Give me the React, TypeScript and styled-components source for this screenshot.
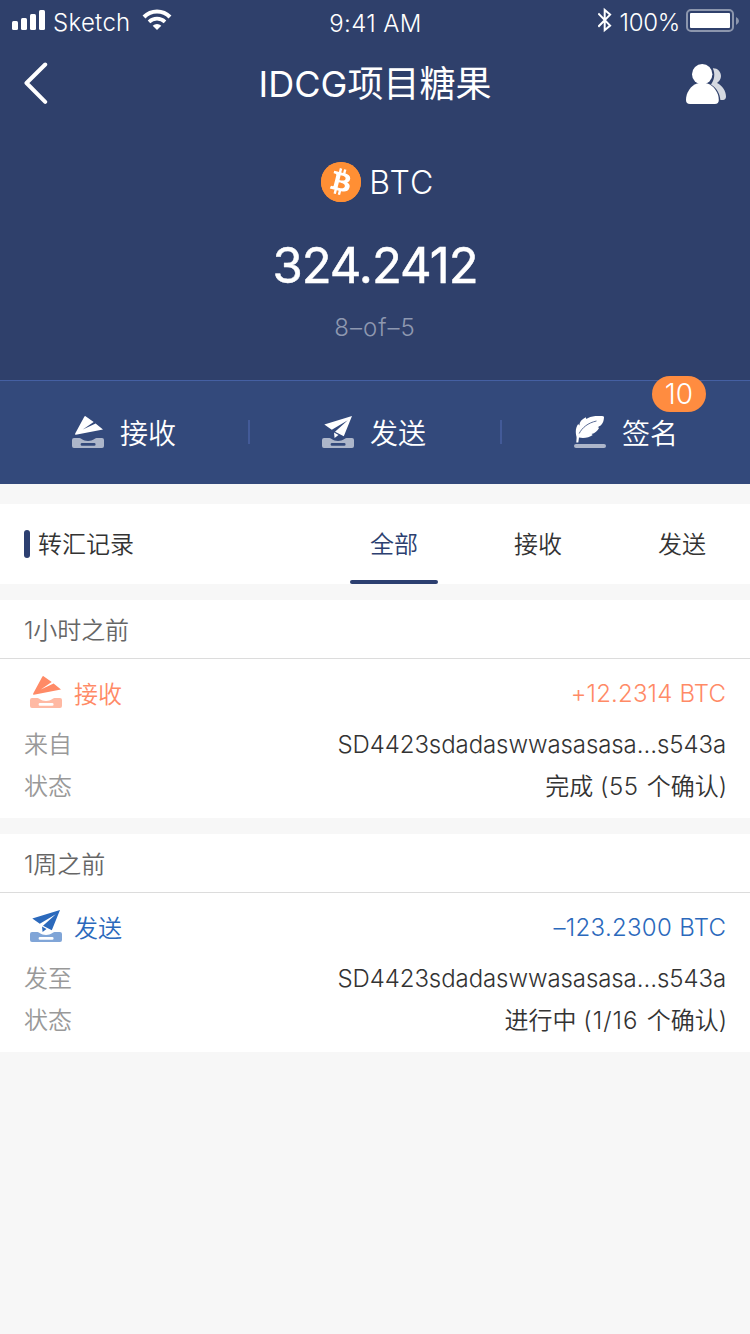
import React from "react";
import styled, { createGlobalStyle } from "styled-components";
import { FaBitcoin } from "react-icons/fa";

const GlobalStyle = createGlobalStyle`
  * { box-sizing: border-box; }
  body {
    margin: 0;
    background: #f7f7f7;
    color: #333;
    font-family: Inter, "Noto Sans CJK SC", sans-serif;
    font-weight: 350;
  }
  svg { display: block; flex: none; }
`;

const Screen = styled.div`
  width: 750px;
  min-height: 1334px;
  background: #f7f7f7;
`;

const Hero = styled.header`
  height: 380px;
  background: #2f406b;
  color: #fff;
`;

const StatusBar = styled.div`
  display: grid;
  grid-template-columns: 1fr auto 1fr;
  height: 40px;
  padding: 0 11px 0 12px;
`;

const StatusGroup = styled.div<{ $end?: boolean }>`
  display: flex;
  align-items: flex-start;
  justify-content: ${(p) => (p.$end ? "flex-end" : "flex-start")};
`;

const StatusText = styled.span<{ $spacing: number; $top?: number; $gap?: number }>`
  margin-top: ${(p) => p.$top ?? 8}px;
  margin-right: ${(p) => p.$gap ?? 0}px;
  font-size: 24px;
  line-height: 30px;
  letter-spacing: ${(p) => p.$spacing}px;
  white-space: nowrap;
`;

const NavBar = styled.nav`
  display: grid;
  grid-template-columns: 40px 1fr 40px;
  align-items: center;
  height: 88px;
  padding: 0 24px;
`;

const Title = styled.h1`
  margin: 0;
  text-align: center;
  font-size: 36px;
  line-height: 50px;
  font-weight: 400;
  letter-spacing: 0;
`;

const Balance = styled.section`
  display: flex;
  flex-direction: column;
  align-items: center;
  padding-top: 34px;
`;

const Coin = styled.div`
  display: flex;
  align-items: center;
  gap: 8px;
  height: 40px;
  margin-left: 6px;
`;

const CoinBadge = styled.span`
  width: 40px;
  height: 40px;
  border-radius: 50%;
  overflow: hidden;
  background: radial-gradient(#fff 50%, #ff8f34 54%);
  color: #ff8f34;

  svg { margin: -2px; }
`;

const CoinName = styled.span`
  padding-top: 2px;
  font-size: 32px;
  line-height: 40px;
  font-weight: 300;
  letter-spacing: 1.2px;
`;

const Amount = styled.strong`
  margin-top: 34px;
  font-size: 49px;
  line-height: 60px;
  font-weight: 400;
  letter-spacing: -1px;
  -webkit-text-stroke: 0.5px #fff;
`;

const Quorum = styled.span`
  margin-top: 17px;
  font-size: 24px;
  line-height: 30px;
  letter-spacing: 1px;
  color: #8e98b0;
`;

const ActionBar = styled.div`
  display: flex;
  align-items: center;
  height: 104px;
  background: #33497b;
  box-shadow: inset 0 1px #4560a3;
  color: #fff;
`;

const Action = styled.button<{ $nudge?: number }>`
  flex: 1;
  position: relative;
  display: flex;
  align-items: center;
  justify-content: center;
  gap: 16px;
  height: 100%;
  padding: 0 ${(p) => p.$nudge ?? 0}px 0 0;
  border: 0;
  background: none;
  color: inherit;
  font: inherit;
`;

const ActionLabel = styled.span`
  padding-top: 3px;
  font-size: 28px;
  line-height: 40px;
`;

const Divider = styled.i`
  width: 2px;
  height: 24px;
  background: #435a98;
`;

const CountBadge = styled.span`
  position: absolute;
  top: -4px;
  right: 44px;
  width: 54px;
  height: 36px;
  border-radius: 18px;
  background: #ff8c40;
  font-size: 28px;
  line-height: 37px;
  text-align: center;
`;

const RecordsBar = styled.div`
  display: flex;
  align-items: stretch;
  justify-content: space-between;
  height: 80px;
  margin: 20px 0 16px;
  padding: 0 24px;
  background: #fff;
  font-size: 24px;
`;

const RecordsTitle = styled.h2`
  display: flex;
  align-items: center;
  gap: 8px;
  margin: 0;
  padding-top: 2px;
  font-size: 24px;
  line-height: 40px;
  font-weight: 350;

  &::before {
    content: "";
    width: 6px;
    height: 28px;
    margin-bottom: 2px;
    border-radius: 3px;
    background: #2c3f70;
  }
`;

const Tabs = styled.div`
  display: flex;
  gap: 56px;
`;

const Tab = styled.button<{ $active?: boolean }>`
  display: flex;
  flex-direction: column;
  justify-content: space-between;
  width: 88px;
  padding: 21px 0 0;
  border: 0;
  background: none;
  color: ${(p) => (p.$active ? "#2c3f70" : "#333")};
  font: inherit;
  line-height: 40px;

  &::after {
    content: "";
    width: 88px;
    height: 4px;
    border-radius: 2px;
    background: ${(p) => (p.$active ? "#2c3f70" : "transparent")};
  }
`;

const TabText = styled.span`
  align-self: center;
`;

const Card = styled.article`
  height: 218px;
  margin-bottom: 16px;
  background: #fff;
  font-size: 24px;
`;

const CardTime = styled.div`
  height: 59px;
  padding: 0 24px;
  border-bottom: 1px solid #dcdcdc;
  color: #666;
  line-height: 61px;
  letter-spacing: -0.1px;
`;

const CardHead = styled.div<{ $color: string }>`
  display: flex;
  align-items: center;
  height: 64px;
  padding: 2px 24px 0 30px;
  color: ${(p) => p.$color};
`;

const Kind = styled.span`
  flex: 1;
  margin-left: 12px;
`;

const Sum = styled.span<{ $spacing: number }>`
  margin-top: 2px;
  letter-spacing: ${(p) => p.$spacing}px;
  margin-right: ${(p) => -p.$spacing}px;
`;

const Line = styled.div`
  display: flex;
  justify-content: space-between;
  height: 42px;
  padding: 0 24px;
  line-height: 44px;
`;

const Label = styled.span`
  color: #999;
`;

const Address = styled.span`
  letter-spacing: -0.08px;
`;

const Status = styled.span`
  margin-right: -1px;
`;

const Confirmations = styled.span<{ $spacing: number }>`
  margin-right: 1.5px;
  letter-spacing: ${(p) => p.$spacing}px;
`;

const SignalIcon = () => (
  <svg width="41" height="40" fill="#fff">
    <rect x="0" y="21" width="6" height="9" rx="1.5" />
    <rect x="9" y="18" width="6" height="12" rx="1.5" />
    <rect x="18" y="14" width="6" height="16" rx="1.5" />
    <rect x="27" y="10" width="6" height="20" rx="1.5" />
  </svg>
);

const WifiIcon = () => (
  <svg width="42" height="40" viewBox="0 0 42 40" fill="none" stroke="#fff">
    <path d="M13 17a18 18 0 0 1 26 0" strokeWidth="4" />
    <path d="M18 21.900a11.500 11.500 0 0 1 16 0" strokeWidth="3.600" />
    <path d="M26 30l-4.300-4.200a6.200 6.200 0 0 1 8.600 0z" fill="#fff" stroke="none" />
  </svg>
);

const BluetoothIcon = () => (
  <svg width="22" height="40" viewBox="0 0 22 40" fill="none" stroke="#fff" strokeWidth="2">
    <path d="M.3 13.500L12.100 25.600 6.700 30.200V10L12.100 14.600.3 26.700" />
  </svg>
);

const BatteryIcon = () => (
  <svg width="53" height="40" fill="#fff">
    <rect x="1" y="10" width="46" height="21" rx="4" fill="none" stroke="#fff" strokeOpacity=".45" strokeWidth="2" />
    <rect x="4" y="13" width="40" height="15" rx="1" />
    <path d="M50 17q3 1.500 3 4t-3 4z" opacity=".45" />
  </svg>
);

const BackIcon = () => (
  <svg width="26" height="44" viewBox="0 0 26 44" fill="none" stroke="#fff" strokeWidth="4" strokeLinecap="round" strokeLinejoin="round">
    <path d="M21.200 2.500L2.500 21l18.700 18.800" />
  </svg>
);

const PeopleIcon = () => (
  <svg width="40" height="40" viewBox="0 0 40 40" fill="#fff">
    <path d="M26.800 4.300C31.300 4 35 7.600 35 12c0 3-1.600 5.300-4 7 5.500 2.600 9 8 9 13.500 0 2.300-1.200 3.500-3 3.500h-2.600c-.6-6.400-3.600-12-9.400-15.500 3.200-4.300 4.600-10.300 1.800-16.200z" opacity=".8" />
    <circle cx="16.200" cy="10.200" r="10.200" />
    <path d="M11 19.500h10.500C28 22 32.800 28.500 32.800 36c0 2.700-1.300 4-4 4H4c-2.700 0-4-1.300-4-4 0-7.500 4.500-14 11-16.500z" />
  </svg>
);

const Tray = () => (
  <path
    opacity=".6"
    fillRule="evenodd"
    d="M2 22h5.500c2 0 3 3 8.500 3s6.500-3 8.500-3H30q2 0 2 2v6q0 2-2 2H2q-2 0-2-2v-6q0-2 2-2zM10 27a1.400 1.400 0 0 0 0 2.800h12.200a1.400 1.400 0 0 0 0-2.800z"
  />
);

const ReceiveIcon = () => (
  <svg width="32" height="32" viewBox="0 0 32 32" fill="currentColor">
    <path d="M13.200 0L21.700 5.900 10.800 13.600 23.600 7.400 31 13.600 3.800 18.800Q2.600 18.800 3.200 17.500L12.400.5z" />
    <Tray />
  </svg>
);

const SendIcon = () => (
  <svg width="32" height="32" viewBox="0 0 32 32" fill="currentColor">
    <path d="M30 0L2.300 8.400 9.800 13.800 25.800 4.200 13 15.800 21.800 20.300z" />
    <path d="M12 16.500l4.500 2.500-3.900 3z" />
    <Tray />
  </svg>
);

const SignIcon = () => (
  <svg width="32" height="32" viewBox="0 0 32 32" fill="currentColor">
    <path d="M30 1.300C29.800 5.500 28.600 9.300 23.700 11.200L25.200 11.800C23.500 15.200 21 17.300 17.500 18L18.800 18.900C15 21.500 10.500 22.600 5 21.600L4.300 26.500H2.300C2.300 24 3 22 2.200 19.500 1.300 15.500 1.800 11.500 4.200 8L5.400 9.500C5.300 6 7.500 3.500 11.800 1.200L12.300 3C16 .3 23-.8 29 .2Q30 .4 30 1.300z" />
    <path d="M5.200 17.500C8 11.800 14 6.800 22.500 5" fill="none" stroke="#33497b" strokeWidth=".8" />
    <rect y="28" width="32" height="4" rx="2" opacity=".6" />
  </svg>
);

const records = [
  {
    time: "1小时之前",
    kind: "接收",
    icon: <ReceiveIcon />,
    color: "#ff8a66",
    sum: "+12.2314 BTC",
    sumSpacing: 0.17,
    party: "来自",
    state: "完成",
    count: "(55",
    countSpacing: 0.5,
  },
  {
    time: "1周之前",
    kind: "发送",
    icon: <SendIcon />,
    color: "#2b69bc",
    sum: "–123.2300 BTC",
    sumSpacing: 0.3,
    party: "发至",
    state: "进行中",
    count: "(1/16",
    countSpacing: 1,
  },
];

export default function App() {
  return (
    <Screen>
      <GlobalStyle />
      <Hero>
        <StatusBar>
          <StatusGroup>
            <SignalIcon />
            <StatusText $spacing={0.3}>Sketch</StatusText>
            <WifiIcon />
          </StatusGroup>
          <StatusText $spacing={0.4} $top={9}>9:41 AM</StatusText>
          <StatusGroup $end>
            <BluetoothIcon />
            <StatusText $spacing={-0.3} $gap={6}>100%</StatusText>
            <BatteryIcon />
          </StatusGroup>
        </StatusBar>
        <NavBar>
          <BackIcon />
          <Title>IDCG项目糖果</Title>
          <PeopleIcon />
        </NavBar>
        <Balance>
          <Coin>
            <CoinBadge>
              <FaBitcoin size={44} />
            </CoinBadge>
            <CoinName>BTC</CoinName>
          </Coin>
          <Amount>324.2412</Amount>
          <Quorum>8–of–5</Quorum>
        </Balance>
      </Hero>
      <ActionBar>
        <Action>
          <ReceiveIcon />
          <ActionLabel>接收</ActionLabel>
        </Action>
        <Divider />
        <Action $nudge={2}>
          <SendIcon />
          <ActionLabel>发送</ActionLabel>
        </Action>
        <Divider />
        <Action>
          <SignIcon />
          <ActionLabel>签名</ActionLabel>
          <CountBadge>10</CountBadge>
        </Action>
      </ActionBar>
      <RecordsBar>
        <RecordsTitle>转汇记录</RecordsTitle>
        <Tabs>
          <Tab $active><TabText>全部</TabText></Tab>
          <Tab><TabText>接收</TabText></Tab>
          <Tab><TabText>发送</TabText></Tab>
        </Tabs>
      </RecordsBar>
      {records.map((r) => (
        <Card key={r.time}>
          <CardTime>{r.time}</CardTime>
          <CardHead $color={r.color}>
            {r.icon}
            <Kind>{r.kind}</Kind>
            <Sum $spacing={r.sumSpacing}>{r.sum}</Sum>
          </CardHead>
          <Line>
            <Label>{r.party}</Label>
            <Address>SD4423sdadaswwasasasa…s543a</Address>
          </Line>
          <Line>
            <Label>状态</Label>
            <Status>
              {r.state} <Confirmations $spacing={r.countSpacing}>{r.count}</Confirmations> 个确认)
            </Status>
          </Line>
        </Card>
      ))}
    </Screen>
  );
}
